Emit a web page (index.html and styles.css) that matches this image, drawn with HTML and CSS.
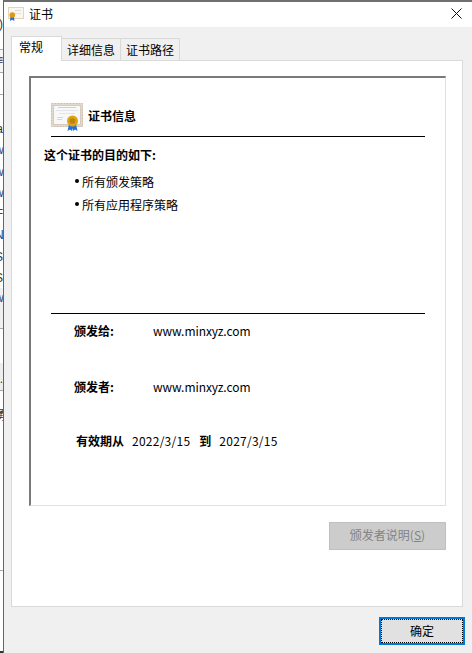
FILE: index.html
```html
<!DOCTYPE html>
<html lang="zh-CN">
<head>
<meta charset="utf-8">
<title>证书</title>
<link rel="stylesheet" href="styles.css">
</head>
<body>
<div class="backdrop">
  <div class="bg-row r1"><span class="ch">)</span></div>
  <div class="bg-row r2"><span class="ch">≡</span></div>
  <div class="bg-row r3"></div>
  <div class="bg-row r4"><span class="ch">a</span><span class="ch blue">w</span><span class="ch blue">w</span><span class="ch blue">w</span><span class="ch blue">F</span><span class="ch blue">N</span><span class="ch">S</span><span class="ch">S</span></div>
  <div class="bg-row r5"><span class="ch blue">w</span></div>
  <div class="bg-row r6"></div>
  <div class="bg-row r7"><span class="ch">.</span></div>
  <div class="bg-row r8"><span class="ch">勇</span></div>
  <div class="bg-row r9"></div>
</div>
<main class="dialog">
  <header class="titlebar">
    <svg class="title-icon" viewBox="0 0 16 16" aria-hidden="true">
      <rect x="0.500" y="1.500" width="15" height="11" fill="#fbf7ee" stroke="#e6d5b8"/>
      <rect x="7" y="4" width="6" height="1" fill="#dcdcdc"/>
      <rect x="7" y="7" width="6" height="1" fill="#e4e4e4"/>
      <path d="M2.500 10 L2 15 L4.200 13.800 L6.400 15 L6 10Z" fill="#2c6fd6"/>
      <circle cx="4.300" cy="9" r="2.800" fill="#d99a16"/>
    </svg>
    <span class="title-text">证书</span>
    <svg class="close" viewBox="0 0 11 11" aria-hidden="true"><path d="M0.500 0.500 L10.500 10.500 M10.500 0.500 L0.500 10.500" stroke="#111" stroke-width="1" fill="none"/></svg>
  </header>
  <div class="content">
    <nav class="tabs">
      <div class="tab active">常规</div>
      <div class="tab">详细信息</div>
      <div class="tab">证书路径</div>
    </nav>
    <section class="panel">
      <div class="cert-box">
        <div class="cert-head">
          <svg class="cert-icon" viewBox="0 0 32 28" aria-hidden="true">
            <rect x="0.500" y="0.500" width="31" height="23" fill="#e2d9ce" stroke="#c8bbac" stroke-dasharray="2 1"/>
            <rect x="2.500" y="2.500" width="27" height="19" fill="#f8f8f8" stroke="#d6cbbd"/>
            <rect x="7" y="4" width="18" height="1" fill="#ccd2da"/>
            <rect x="5" y="7" width="22" height="1" fill="#e2e5e9"/>
            <rect x="8" y="10" width="16" height="1" fill="#e2e5e9"/>
            <rect x="6" y="14" width="6" height="1" fill="#d4d8dd"/>
            <rect x="6" y="16" width="5" height="1" fill="#d4d8dd"/>
            <path d="M18 21 L16.500 28 L19 26.500 L21 28 L21.500 25 L22 28 L24 26.500 L26.500 28 L25 21Z" fill="#1f6fe0"/>
            <circle cx="21.500" cy="18" r="5.500" fill="#dca314"/>
            <circle cx="21.500" cy="18" r="2.800" fill="#c0810c"/>
          </svg>
          <span class="cert-title">证书信息</span>
        </div>
        <div class="purpose-title">这个证书的目的如下:</div>
        <ul class="purposes">
          <li>所有颁发策略</li>
          <li>所有应用程序策略</li>
        </ul>
        <div class="info">
          <div class="info-row first"><b class="lab">颁发给:</b><span class="host">www.minxyz.com</span></div>
          <div class="info-row second"><b class="lab">颁发者:</b><span class="host">www.minxyz.com</span></div>
          <div class="validity"><b>有效期从</b><span class="date">2022/3/15</span><b class="to">到</b><span class="date">2027/3/15</span></div>
        </div>
      </div>
      <div class="panel-actions"><div class="btn disabled">颁发者说明(<u>S</u>)</div></div>
    </section>
    <footer class="footer"><div class="btn ok"><span class="focus">确定</span></div></footer>
  </div>
</main>
</body>
</html>
```
FILE: styles.css
```css
* { box-sizing: border-box; }
html, body { margin: 0; height: 653px; overflow: hidden; }
body {
  width: 472px;
  display: flex;
  background: #fff;
  font-family: "Noto Sans CJK SC", "Open Sans", sans-serif;
  font-size: 12px;
  color: #000;
}
.backdrop {
  width: 3px;
  height: 653px;
  flex: none;
  overflow: hidden;
  display: flex;
  flex-direction: column;
  background: #fff;
  color: #333;
  font-family: "Liberation Sans", "Noto Sans CJK SC", sans-serif;
  font-size: 12px;
  line-height: 21.300px;
}
.bg-row { width: 3px; flex: none; overflow: hidden; border-bottom: 1px solid #a8a8a8; display: flex; flex-direction: column; }
.ch { display: block; margin-left: -5px; width: 8px; text-align: right; white-space: nowrap; }
.blue { color: #24466f; }
.r1 { height: 50px; padding-top: 14px; }
.r2 { height: 23px; background: #f5f5f5; }
.r3 { height: 22px; }
.r4 { height: 193px; padding-top: 24px; border-bottom: 0; }
.r5 { height: 41px; background: #f0f0f0; }
.r6 { height: 34px; border-bottom: 0; }
.r7 { height: 28px; background: #eeeeee; padding-top: 6px; }
.r8 { height: 180px; padding-top: 15px; }
.r9 { flex: 1; border-bottom: 2px solid #333; }
.dialog {
  flex: 1;
  height: 653px;
  display: flex;
  flex-direction: column;
  border-left: 1px solid #666;
  border-top: 2px solid #6f6f6f;
}
.titlebar {
  height: 25px;
  flex: none;
  background: #fff;
  display: flex;
  align-items: center;
  padding: 0 10px 2px 4px;
}
.title-icon { width: 16px; height: 16px; }
.title-text { margin-left: 5px; }
.close { width: 11px; height: 11px; margin-left: auto; }
.content {
  flex: 1;
  background: #f0f0f0;
  padding: 9px 9px 0 7px;
  display: flex;
  flex-direction: column;
}
.tabs { display: flex; align-items: flex-end; height: 25px; flex: none; margin-bottom: -1px; position: relative; z-index: 1; }
.tab {
  height: 23px;
  border: 1px solid #d9d9d9;
  border-bottom: 0;
  border-left: 0;
  line-height: 21px;
  white-space: nowrap;
  width: 59px;
  text-align: center;
}
.tab.active {
  height: 25px;
  width: 51px;
  background: #fff;
  border-left: 1px solid #d9d9d9;
  line-height: 20px;
  text-align: left;
  padding-left: 7px;
}
.panel {
  height: 547px;
  flex: none;
  background: #fff;
  border: 1px solid #d9d9d9;
  padding: 15px 16px 0 17px;
}
.cert-box {
  height: 430px;
  border-top: 2px solid #7a7a7a;
  border-left: 2px solid #7a7a7a;
  border-right: 1px solid #e0e0e0;
  border-bottom: 1px solid #e0e0e0;
  padding: 24px 20px 0 13px;
  display: flex;
  flex-direction: column;
}
.cert-head {
  margin-left: 7px;
  display: flex;
  align-items: center;
  gap: 5px;
  height: 35px;
  flex: none;
  border-bottom: 1px solid #000;
  padding-bottom: 5px;
}
.cert-icon { width: 32px; height: 28px; }
.cert-title { font-weight: 700; margin-bottom: 3px; }
.purpose-title { font-weight: 700; margin-top: 9px; line-height: 17px; }
.purposes { list-style: none; margin: 10px 0 0; padding: 0; }
.purposes li { position: relative; height: 23px; line-height: 17px; padding-left: 38px; }
.purposes li::before { content: ""; position: absolute; left: 31px; top: 6px; width: 4px; height: 4px; border-radius: 50%; background: #000; }
.info { margin-left: 7px; margin-top: 94px; border-top: 1px solid #000; }
.info-row { display: flex; padding-left: 23px; line-height: 17px; }
.info-row .lab { width: 79px; flex: none; }
.info-row.first { margin-top: 8px; }
.info-row.second { margin-top: 39px; }
.host { letter-spacing: -0.070px; }
.validity { display: flex; margin-top: 37px; padding-left: 25px; line-height: 17px; gap: 8px; }
.date { letter-spacing: 0.250px; }
.to { margin-left: 1px; }
.panel-actions { display: flex; justify-content: flex-end; margin-top: 16px; }
.btn { display: flex; align-items: center; justify-content: center; }
.btn.disabled {
  width: 117px;
  height: 28px;
  padding-bottom: 3px;
  background: #cccccc;
  border: 1px solid #bfbfbf;
  color: #838383;
}
.footer { display: flex; justify-content: flex-end; padding-top: 10px; }
.btn.ok {
  width: 86px;
  height: 28px;
  margin-right: -2px;
  background: #e1e1e1;
  border: 2px solid #0078d7;
}
.focus {
  width: 100%;
  height: 100%;
  padding-bottom: 2px;
  display: flex;
  align-items: center;
  justify-content: center;
  border: 1px dotted #000;
}
```
